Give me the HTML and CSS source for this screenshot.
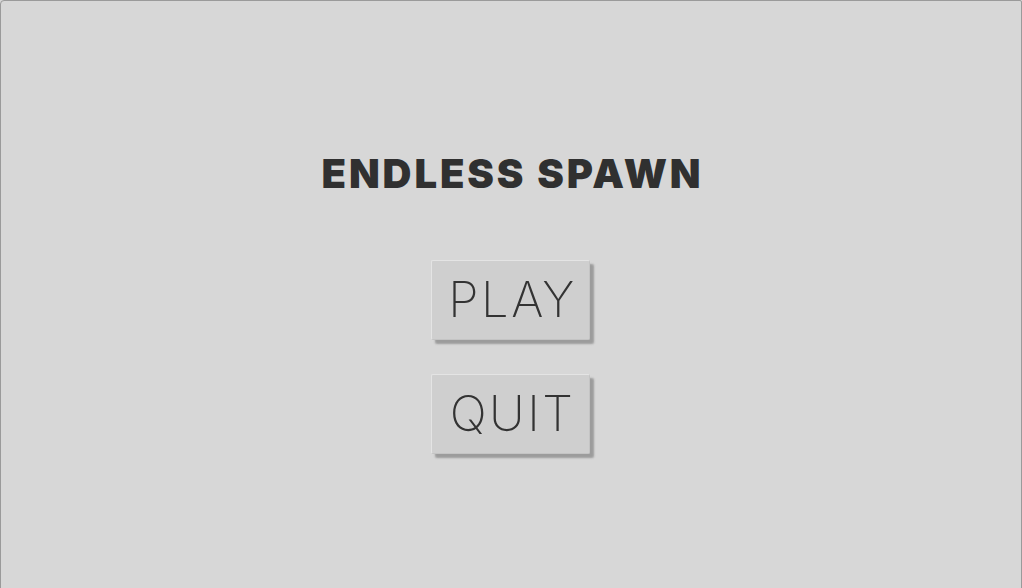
FILE: index.html
```html
<!DOCTYPE html>
<html>
<head>
<meta charset="utf-8">
<link rel="stylesheet" href="styles.css">
</head>
<body>
<div class="frame">
  <h1 class="title">ENDLESS SPAWN</h1>
  <div class="menu">
    <button class="btn">PLAY</button>
    <button class="btn">QUIT</button>
  </div>
</div>
</body>
</html>
```
FILE: styles.css
```css
html, body {
  margin: 0;
  padding: 0;
  background: #d7d7d7;
}
.frame {
  box-sizing: border-box;
  width: 1022px;
  height: 600px;
  border: 1px solid #9a9a9a;
  border-top-left-radius: 4px;
  border-top-right-radius: 2px;
  background: #d7d7d7;
  display: flex;
  flex-direction: column;
  align-items: center;
  padding-top: 150px;
}
.title {
  margin: 0;
  font-family: Inter, "DejaVu Sans", sans-serif;
  font-weight: 900;
  font-size: 40px;
  line-height: 46px;
  letter-spacing: 2.9px;
  padding-left: 3px;
  color: #303030;
}
.menu {
  margin-top: 63px;
  display: flex;
  flex-direction: column;
  align-items: center;
  gap: 34px;
  padding-right: 2px;
}
.btn {
  box-sizing: border-box;
  width: 159px;
  height: 80px;
  padding: 0 0 0 5px;
  background: #cfcfcf;
  border: 1px solid #e4e4e4;
  border-right-color: #c4c4c4;
  border-bottom-color: #c4c4c4;
  border-radius: 2px;
  box-shadow: 4px 4px 2px #9c9c9c;
  font-family: Inter, "Open Sans", sans-serif;
  font-weight: 250;
  font-size: 49px;
  line-height: 78px;
  letter-spacing: 2.5px;
  color: #333;
  text-align: center;
}
```
